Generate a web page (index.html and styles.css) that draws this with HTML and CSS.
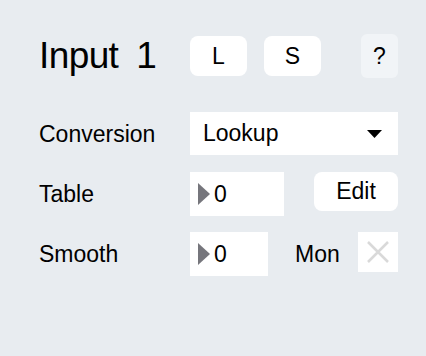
FILE: index.html
```html
<!DOCTYPE html>
<html lang="en">
<head>
<meta charset="UTF-8">
<meta name="viewport" content="width=device-width, initial-scale=1.0">
<title>Input 1</title>
<link rel="stylesheet" href="styles.css">
</head>
<body>
<div class="panel">
<div class="head">
<h1 class="title"><span>Input</span><span>1</span></h1>
<button class="btn small">L</button>
<button class="btn small">S</button>
<button class="help">?</button>
</div>
<div class="row">
<label class="lbl">Conversion</label>
<div class="select">
<span>Lookup</span>
<svg width="15" height="8" viewBox="0 0 15 8"><polygon points="0,0 15,0 7.5,8" fill="#000"/></svg>
</div>
</div>
<div class="row">
<label class="lbl">Table</label>
<div class="numInput wide"><span class="arrow"></span>0</div>
<button class="btn edit">Edit</button>
</div>
<div class="row">
<label class="lbl">Smooth</label>
<div class="numInput"><span class="arrow"></span>0</div>
<span class="mon">Mon</span>
<div class="check">
<svg width="22" height="22" viewBox="0 0 22 22"><path d="M1 1 L21 21 M21 1 L1 21" stroke="#d9d9d9" stroke-width="2.5"/></svg>
</div>
</div>
</div>
</body>
</html>
```

FILE: styles.css
```css
* {
margin: 0;
padding: 0;
box-sizing: border-box;
font-family: "Liberation Sans", Arial, sans-serif;
}
body {
background-color: #e8ecf0;
color: #000;
}
.panel {
width: 426px;
height: 356px;
padding: 34px 28px 0 39px;
}
.head {
display: flex;
align-items: center;
height: 44px;
}
.title {
width: 151px;
display: flex;
gap: 18px;
font-size: 37px;
letter-spacing: -0.6px;
font-weight: normal;
line-height: 44px;
}
.btn {
background-color: #fff;
border: 0;
border-radius: 8px;
font-size: 23px;
color: #000;
}
.small {
width: 57px;
height: 40px;
}
.small + .small {
margin-left: 17px;
}
.help {
margin-left: auto;
width: 37px;
height: 44px;
border: 0;
border-radius: 6px;
background-color: #f1f4f7;
font-size: 23px;
color: #000;
}
.row {
display: flex;
align-items: flex-start;
margin-top: 34px;
}
.row + .row {
margin-top: 16px;
}
.lbl {
width: 151px;
font-size: 23px;
line-height: 44px;
}
.select {
width: 208px;
height: 43px;
background-color: #fff;
display: flex;
align-items: center;
justify-content: space-between;
padding: 0 16px 0 13px;
font-size: 23px;
}
.numInput {
width: 78px;
height: 44px;
background-color: #fff;
display: flex;
align-items: center;
padding-left: 8px;
font-size: 23px;
}
.numInput.wide {
width: 94px;
}
.arrow {
width: 0;
height: 0;
border-top: 11.5px solid transparent;
border-bottom: 11.5px solid transparent;
border-left: 12px solid #76767c;
margin-right: 4px;
}
.edit {
margin-left: auto;
width: 84px;
height: 39px;
font-size: 23px;
}
.mon {
margin-left: 27px;
font-size: 23px;
line-height: 44px;
}
.check {
margin-left: auto;
width: 40px;
height: 40px;
background-color: #fff;
display: flex;
align-items: center;
justify-content: center;
}
```
